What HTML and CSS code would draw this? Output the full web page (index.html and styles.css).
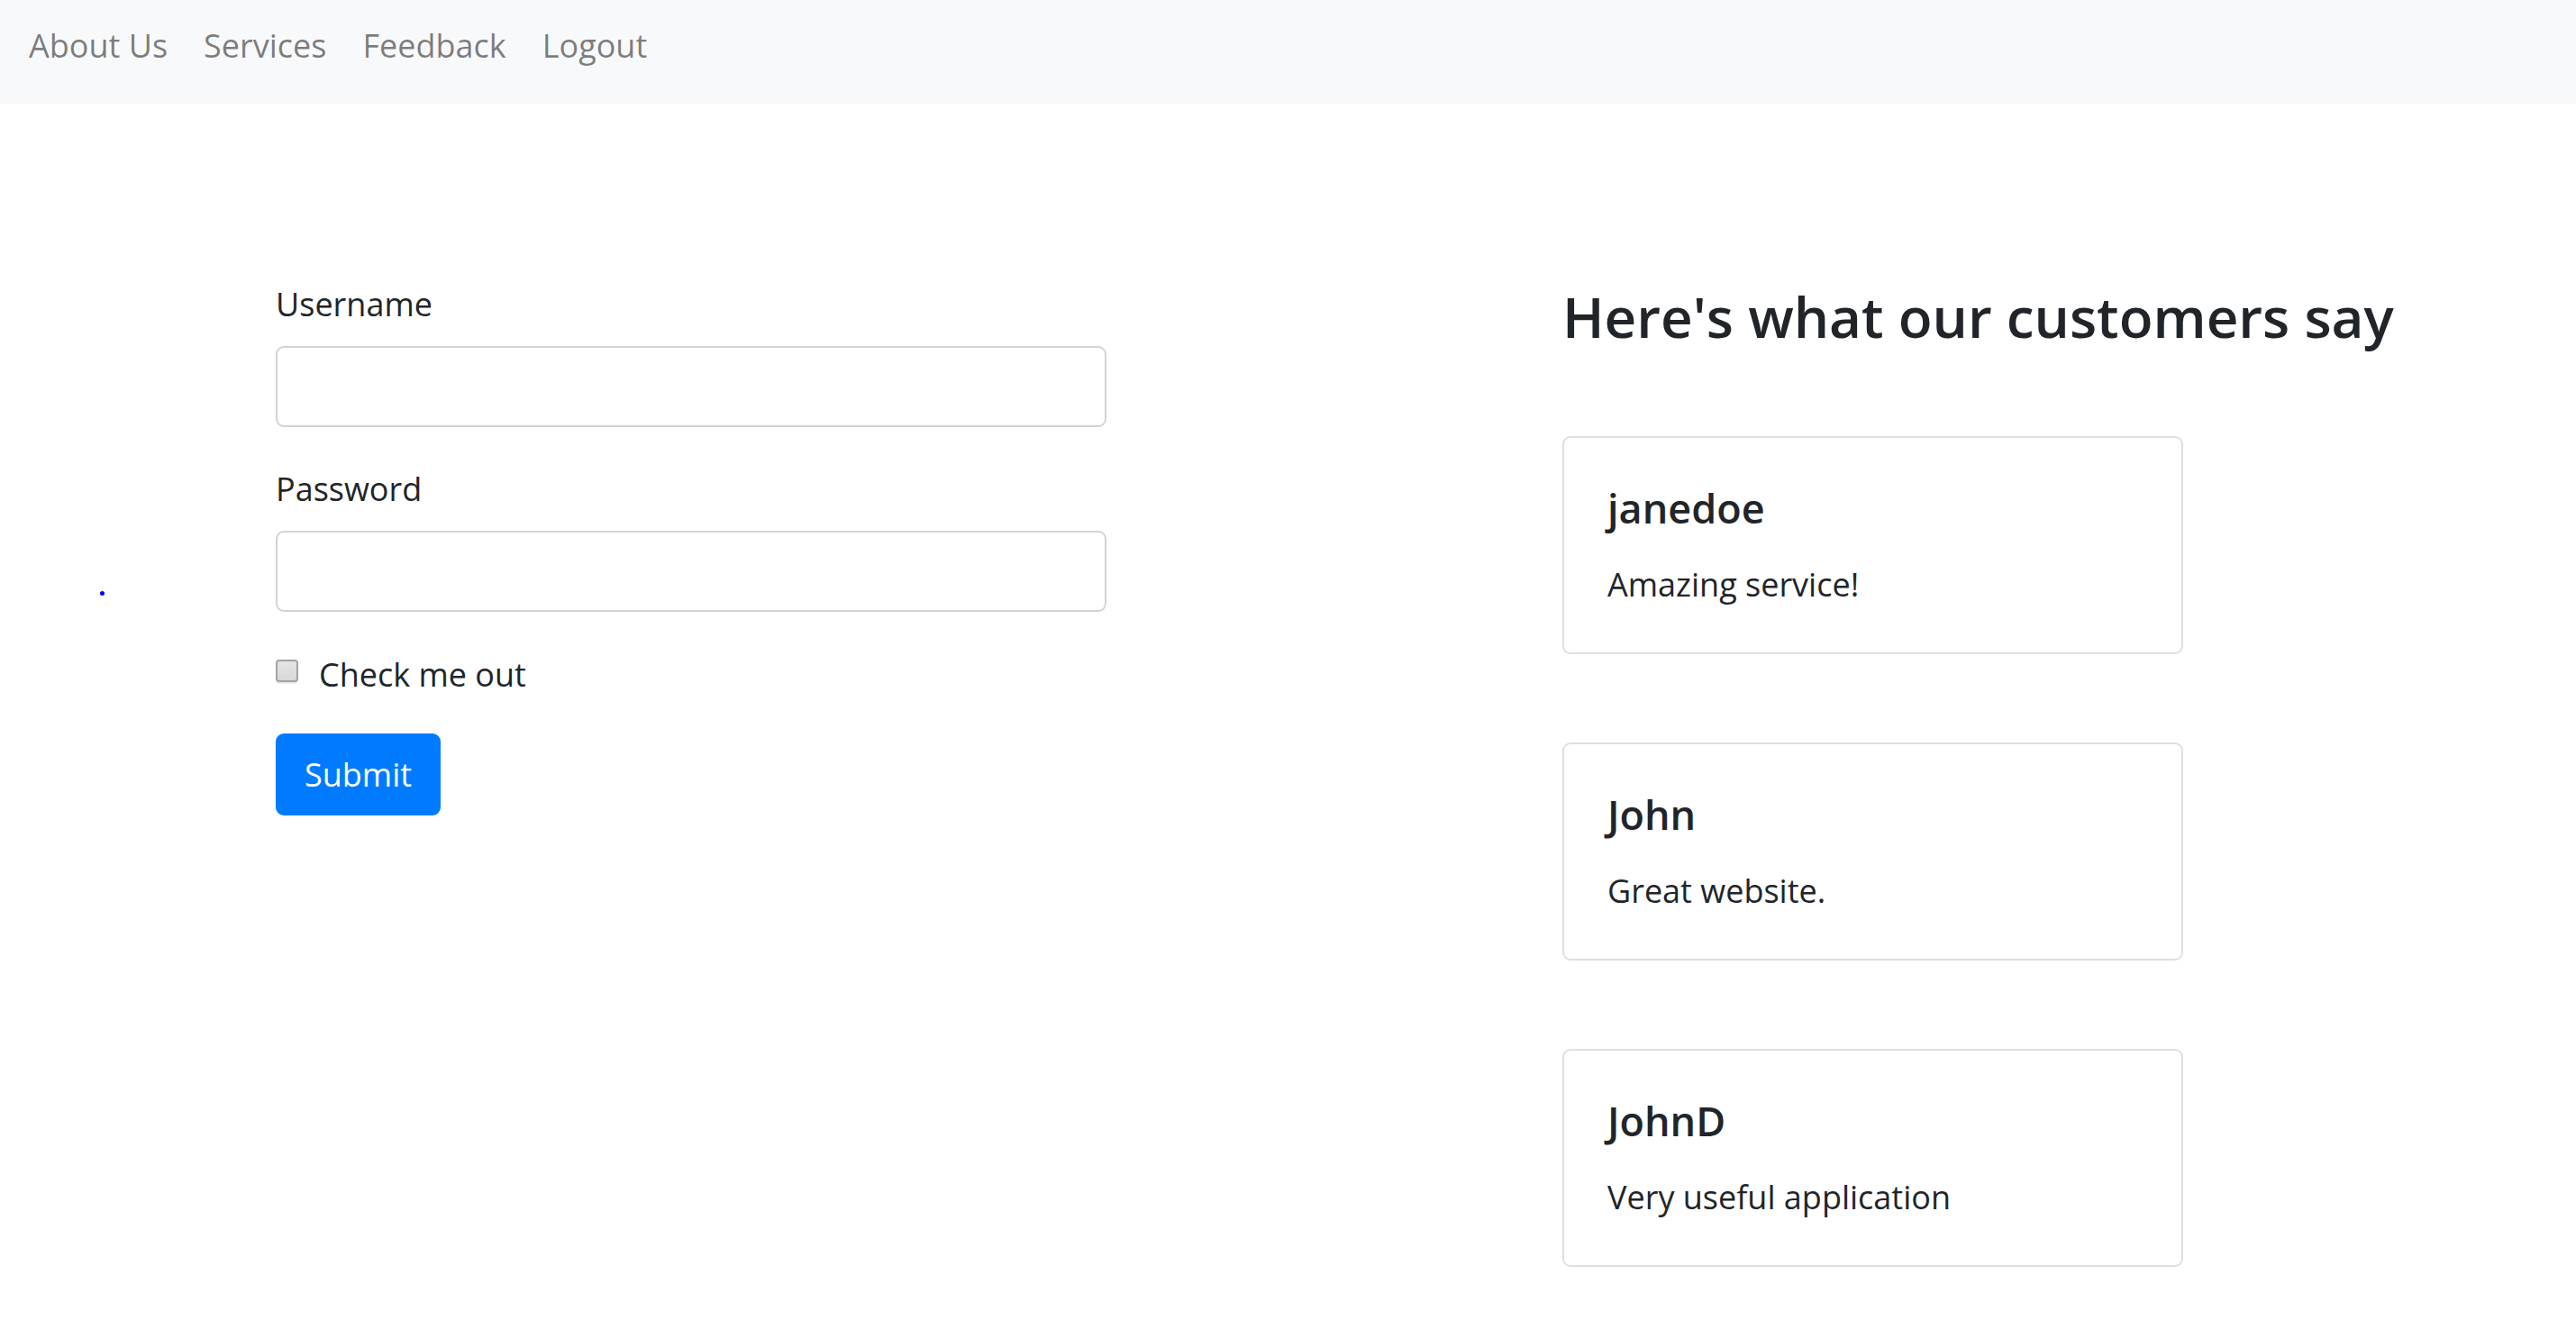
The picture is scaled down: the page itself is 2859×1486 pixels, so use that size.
FILE: index.html
```html
<!DOCTYPE html>
<html lang="en">
<head>
<meta charset="utf-8">
<title>Feedback</title>
<link rel="stylesheet" href="styles.css">
</head>
<body>
<nav class="navbar">
  <ul class="nav-list">
    <li><a class="nav-link" href="#">About Us</a></li>
    <li><a class="nav-link" href="#">Services</a></li>
    <li><a class="nav-link" href="#">Feedback</a></li>
    <li><a class="nav-link" href="#">Logout</a></li>
  </ul>
</nav>
<main class="page">
  <div class="marker-col"><span class="marker"></span></div>
  <form class="login-form">
    <div class="form-group">
      <label class="form-label" for="username">Username</label>
      <input class="form-control" id="username" type="text">
    </div>
    <div class="form-group">
      <label class="form-label" for="password">Password</label>
      <input class="form-control" id="password" type="password">
    </div>
    <div class="form-check">
      <input class="check-input" id="check" type="checkbox">
      <label class="check-label" for="check">Check me out</label>
    </div>
    <button class="btn-primary" type="button">Submit</button>
  </form>
  <section class="reviews">
    <h3 class="reviews-title">Here's what our customers say</h3>
    <div class="card">
      <h5 class="card-title">janedoe</h5>
      <p class="card-text">Amazing service!</p>
    </div>
    <div class="card">
      <h5 class="card-title">John</h5>
      <p class="card-text">Great website.</p>
    </div>
    <div class="card">
      <h5 class="card-title">JohnD</h5>
      <p class="card-text">Very useful application</p>
    </div>
  </section>
</main>
</body>
</html>
```
FILE: styles.css
```css
* { box-sizing: border-box; }

html, body {
  margin: 0;
  padding: 0;
  background: #ffffff;
}

body {
  font-family: "Open Sans", "Noto Sans", "Liberation Sans", sans-serif;
  font-size: 36px;
  line-height: 57px;
  color: #212529;
}

.navbar {
  background: #f8f9fa;
  height: 115px;
  padding: 22px 0 0 32px;
}

.nav-list {
  list-style: none;
  margin: 0;
  padding: 0;
  display: flex;
  gap: 40px;
}

.nav-link {
  color: rgba(0, 0, 0, 0.5);
  text-decoration: none;
  line-height: 57px;
}

.page {
  display: flex;
  align-items: flex-start;
  padding: 193px 0 0 111px;
}

.marker-col {
  flex: none;
  width: 195px;
}

.marker {
  display: block;
  width: 5px;
  height: 5px;
  margin-top: 348px;
  border-radius: 50%;
  background: #0000ff;
}

.login-form {
  flex: none;
  width: 922px;
}

.form-group {
  display: flex;
  flex-direction: column;
  margin-bottom: 39px;
}

.form-label {
  line-height: 54px;
  padding-top: 3px;
  margin-bottom: 19px;
}

.form-control {
  display: block;
  width: 100%;
  height: 90px;
  border: 2px solid #ced4da;
  border-radius: 9px;
  background: #fff;
  font: inherit;
  padding: 0 28px;
}

.form-check {
  display: flex;
  align-items: flex-start;
  margin-bottom: 38px;
}

.check-input {
  appearance: none;
  -webkit-appearance: none;
  flex: none;
  width: 25px;
  height: 25px;
  margin: 14px 23px 0 0;
  border: 2px solid #a3a3a3;
  border-radius: 4px;
  background: linear-gradient(#e4e4e4, #d8d8d8);
  box-shadow: 0 2px 0 #ececec;
}

.check-label {
  line-height: 54px;
  padding-top: 4px;
}

.btn-primary {
  display: inline-flex;
  align-items: center;
  justify-content: center;
  height: 91px;
  padding: 0 30px;
  border: 2px solid #007bff;
  border-radius: 9px;
  background: #007bff;
  color: #ffffff;
  font: inherit;
  line-height: 57px;
}

.reviews {
  flex: none;
  width: 1000px;
  margin-left: 506px;
  padding-top: 1px;
}

.reviews-title {
  margin: 0 0 90px;
  font-size: 62px;
  line-height: 85px;
  font-weight: 600;
  color: #212529;
}

.card {
  width: 689px;
  height: 242px;
  border: 2px solid #dfdfdf;
  border-radius: 9px;
  padding: 48px 48px;
  margin-bottom: 98px;
}

.card:last-child {
  margin-bottom: 0;
}

.card-title {
  margin: 0 0 28px;
  font-size: 45px;
  line-height: 55px;
  padding-top: 2px;
  font-weight: 600;
}

.card-text {
  margin: 0;
  line-height: 54px;
  padding-top: 3px;
}
```
